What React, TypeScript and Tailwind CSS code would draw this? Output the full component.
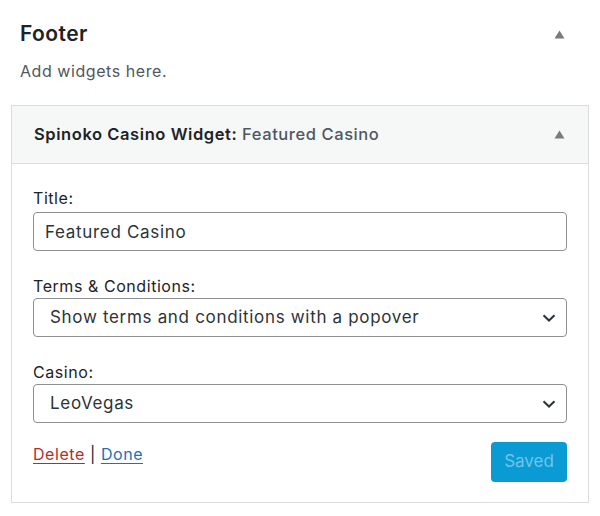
import React from 'react';

const Triangle = () => (
  <svg width="11" height="9" viewBox="0 0 11 9" className="block">
    <path d="M5.5 0.5 L10.5 8.5 L0.5 8.5 Z" fill="#787c82" />
  </svg>
);

const Chevron = () => (
  <svg width="14" height="8" viewBox="0 0 14 8" className="block">
    <path d="M1.5 1.2 L7 6.5 L12.5 1.2" fill="none" stroke="#2c3338" strokeWidth="2" />
  </svg>
);

const SelectField = ({ value }: { value: string }) => (
  <div className="relative">
    <select
      defaultValue={value}
      className="w-full h-[39px] appearance-none rounded-[4px] border border-[#8c8f94] bg-white pl-[16px] pr-[40px] text-[17px] tracking-[0.04em] text-[#2c3338] outline-none"
    >
      <option>{value}</option>
    </select>
    <div className="pointer-events-none absolute right-[11px] top-[16px]">
      <Chevron />
    </div>
  </div>
);

export default function App() {
  return (
    <div
      className="w-[600px] h-[516px] bg-white overflow-hidden"
      style={{ fontFamily: 'Inter, "Noto Sans", sans-serif' }}
    >
      {/* Sidebar heading */}
      <div className="flex items-center justify-between pl-[20px] pr-[35px] pt-[20px]">
        <h2 className="text-[21px] leading-[28px] font-semibold tracking-[0.02em] text-[#1d2327]">Footer</h2>
        <Triangle />
      </div>
      <p className="mt-[11px] pl-[20px] text-[16px] leading-[24px] tracking-[0.035em] text-[#50575e]">Add widgets here.</p>

      {/* Widget */}
      <div className="mx-[11px] mt-[22px] border border-[#dcdcde]">
        <div className="flex items-center justify-between bg-[#f6f7f7] border-b border-[#dcdcde] pl-[22px] pr-[23px] pt-[16px] pb-[17px]">
          <div className="text-[16.5px] leading-[24px] font-semibold tracking-[0.035em] text-[#1d2327]">
            Spinoko Casino Widget: <span className="font-medium text-[#50575e]">Featured Casino</span>
          </div>
          <Triangle />
        </div>

        <div className="px-[21px] pt-[22px] pb-[20px] tracking-[0.035em]">
          <label className="block text-[16px] leading-[24px] text-[#1d2327] mb-[2px]">Title:</label>
          <input
            readOnly
            value="Featured Casino"
            className="block w-full h-[39px] rounded-[4px] border border-[#8c8f94] bg-white px-[11px] text-[17px] tracking-[0.04em] text-[#2c3338] outline-none"
          />

          <label className="block mt-[23px] text-[16px] leading-[24px] text-[#1d2327]">Terms &amp; Conditions:</label>
          <SelectField value="Show terms and conditions with a popover" />

          <label className="block mt-[23px] text-[16px] leading-[24px] text-[#1d2327]">Casino:</label>
          <SelectField value="LeoVegas" />

          <div className="mt-[19px] flex items-start justify-between">
            <div className="text-[16px] leading-[24px] text-[#1d2327]">
              <a className="text-[#b32d2e] underline underline-offset-[3px]">Delete</a>
              <span className="text-[#1d2327]"> | </span>
              <a className="text-[#2271b1] underline underline-offset-[3px]">Done</a>
            </div>
            <button className="w-[76px] h-[40px] rounded-[4px] bg-[#0a9bd4] text-[17px] tracking-normal text-[#72c4e8]">
              Saved
            </button>
          </div>
        </div>
      </div>
    </div>
  );
}
